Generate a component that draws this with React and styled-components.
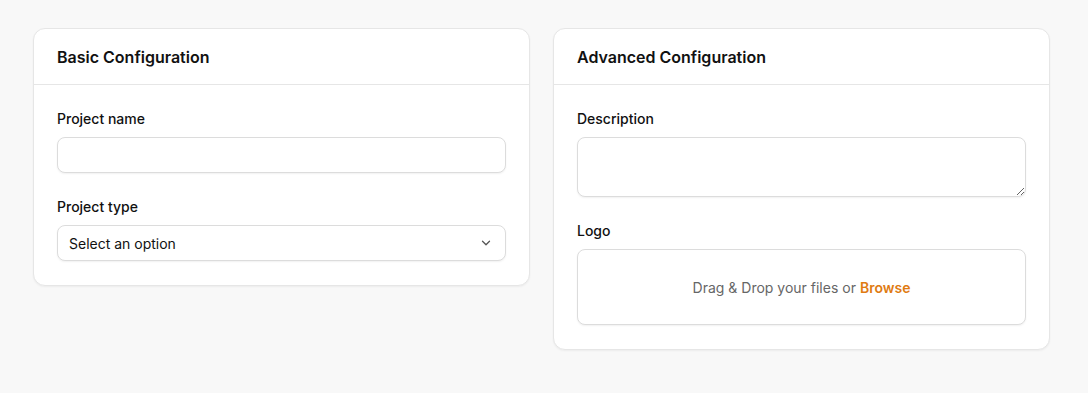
import styled, { createGlobalStyle } from "styled-components";

const GlobalStyle = createGlobalStyle`
  html, body {
    margin: 0;
    background: #f8f8f8;
    font-family: Inter, "Noto Sans", sans-serif;
    color: #111;
  }
  * { box-sizing: border-box; }
`;

const Page = styled.div`
  display: grid;
  grid-template-columns: 1fr 1fr;
  align-items: start;
  gap: 23px;
  padding: 28px 38px 0 33px;
  min-height: 393px;
`;

const Card = styled.section`
  background: #fff;
  border: 1px solid #e6e6e6;
  border-radius: 12px;
  box-shadow: 0 1px 2px rgba(0, 0, 0, 0.05);
  overflow: hidden;
`;

const CardHeader = styled.header`
  height: 56px;
  display: flex;
  align-items: center;
  padding: 0 23px;
  border-bottom: 1px solid #e6e6e6;
`;

const Title = styled.h2`
  margin: 0;
  font-size: 16px;
  font-weight: 600;
  color: #111;
`;

const CardBody = styled.div`
  display: flex;
  flex-direction: column;
  gap: 24px;
  padding: 24px 23px 24px;
`;

const Field = styled.div`
  display: flex;
  flex-direction: column;
  gap: 8px;
`;

const Label = styled.label`
  font-size: 14px;
  font-weight: 500;
  line-height: 20px;
  color: #111;
`;

const boxStyle = `
  width: 100%;
  background: #fff;
  border: 1px solid #dcdcdc;
  border-radius: 8px;
  box-shadow: 0 1px 2px rgba(0, 0, 0, 0.06);
  font-family: Inter, "Noto Sans", sans-serif;
  font-size: 14px;
  color: #111;
  outline: none;
`;

const Input = styled.input`
  ${boxStyle}
  height: 36px;
  padding: 0 12px;
`;

const TextArea = styled.textarea`
  ${boxStyle}
  height: 60px;
  padding: 8px 12px;
  resize: vertical;
  display: block;
`;

const SelectBox = styled.div`
  ${boxStyle}
  height: 36px;
  padding: 0 12px 0 11px;
  display: flex;
  align-items: center;
  justify-content: space-between;
`;

const Chevron = styled.svg`
  width: 14px;
  height: 14px;
  color: #555;
`;

const DropZone = styled.div`
  ${boxStyle}
  height: 76px;
  display: flex;
  align-items: center;
  justify-content: center;
  color: #666;
`;

const Browse = styled.span`
  margin-left: 4px;
  color: #e07b12;
  font-weight: 600;
`;

export default function App() {
  return (
    <>
      <GlobalStyle />
      <Page>
        <Card>
          <CardHeader>
            <Title>Basic Configuration</Title>
          </CardHeader>
          <CardBody>
            <Field>
              <Label>Project name</Label>
              <Input type="text" />
            </Field>
            <Field>
              <Label>Project type</Label>
              <SelectBox>
                <span>Select an option</span>
                <Chevron viewBox="0 0 24 24" fill="none" stroke="currentColor" strokeWidth="2.2" strokeLinecap="round" strokeLinejoin="round">
                  <path d="M6 9l6 6 6-6" />
                </Chevron>
              </SelectBox>
            </Field>
          </CardBody>
        </Card>
        <Card>
          <CardHeader>
            <Title>Advanced Configuration</Title>
          </CardHeader>
          <CardBody>
            <Field>
              <Label>Description</Label>
              <TextArea />
            </Field>
            <Field>
              <Label>Logo</Label>
              <DropZone>
                Drag &amp; Drop your files or<Browse>Browse</Browse>
              </DropZone>
            </Field>
          </CardBody>
        </Card>
      </Page>
    </>
  );
}
